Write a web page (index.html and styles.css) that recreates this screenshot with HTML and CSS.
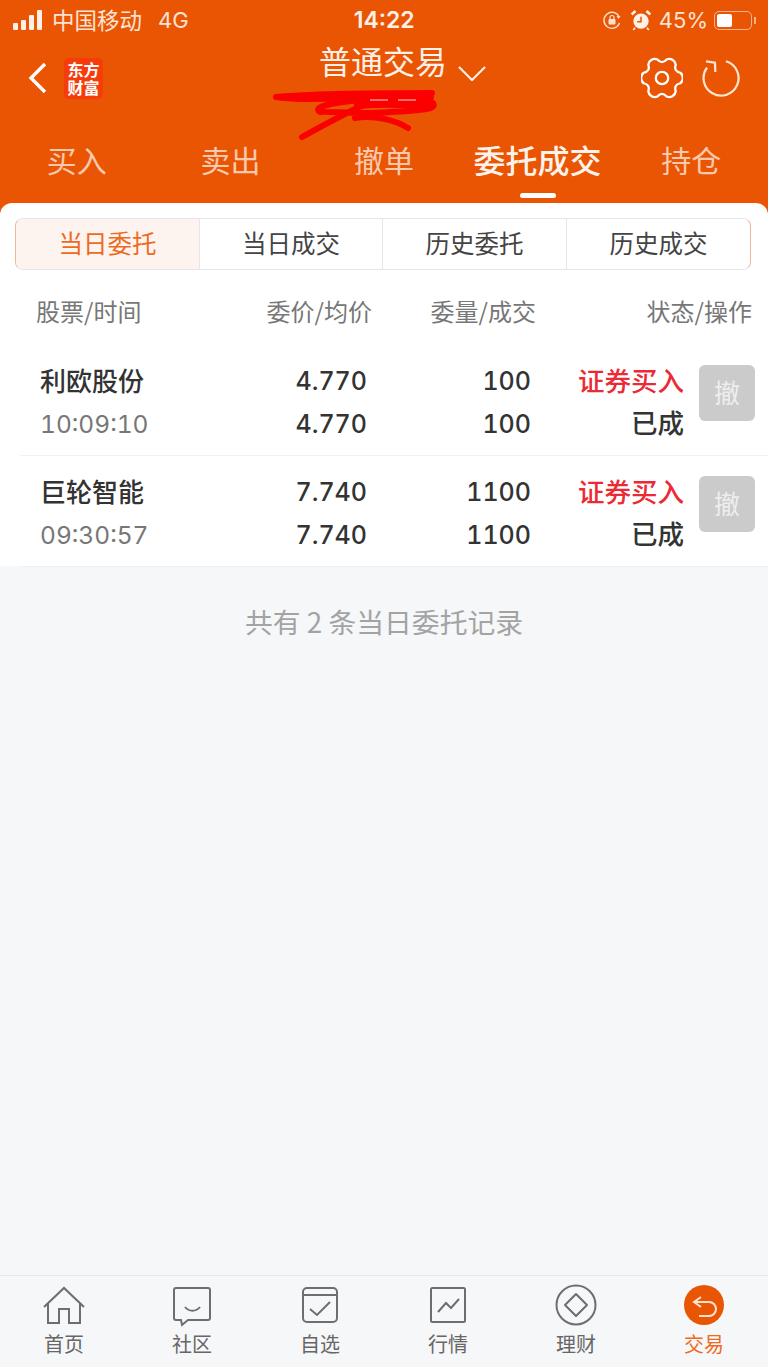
FILE: index.html
```html
<!DOCTYPE html>
<html lang="zh">
<head>
    <meta charset="UTF-8">
    <title>普通交易</title>
    <link rel="stylesheet" href="styles.css">
</head>
<body>
<div class="page">
    <div class="top">
        <div class="status-bar">
            <div class="signal"><i class="b1"></i><i class="b2"></i><i class="b3"></i><i class="b4"></i></div>
            <span class="carrier">中国移动</span>
            <span class="net">4G</span>
            <span class="clock">14:22</span>
            <svg class="lock-icon" width="20" height="20" viewBox="0 0 20 20"><path d="M17 6.500A8 8 0 1 0 17.500 13" fill="none" stroke="#fbe3d3" stroke-width="1.400"/><path d="M14.500 6h4l-2 3z" fill="#fbe3d3"/><rect x="6.500" y="9" width="7" height="5.500" rx="1" fill="#fbe3d3"/><path d="M8 9V7.500a2 2 0 0 1 4 0V9" fill="none" stroke="#fbe3d3" stroke-width="1.200"/></svg>
            <svg class="alarm-icon" width="22" height="22" viewBox="0 0 20 20"><circle cx="10" cy="11" r="7" fill="#fdf0e6"/><path d="M10 7v4.500H6.500" fill="none" stroke="#ea5504" stroke-width="1.400"/><path d="M1.500 5L5 1.800M18.500 5L15 1.800" stroke="#fdf0e6" stroke-width="2.400"/><path d="M4.500 17l-1.500 2M15.500 17l1.500 2" stroke="#fdf0e6" stroke-width="1.500"/></svg>
            <span class="percent">45%</span>
            <div class="battery"><div class="battery-level"></div></div>
            <div class="battery-tip"></div>
        </div>

        <div class="nav">
            <svg class="back-icon" width="22" height="34" viewBox="0 0 22 34"><path d="M19 3L5 17l14 14" fill="none" stroke="#fff" stroke-width="3.400"/></svg>
            <div class="logo"><span>东方</span><span>财富</span></div>
            <div class="title-wrap">
                <span class="title">普通交易</span>
                <svg class="caret" width="30" height="18" viewBox="0 0 30 18"><path d="M2 2l13 13L28 2" fill="none" stroke="#fdf0e6" stroke-width="2.200"/></svg>
            </div>
            <svg class="gear-icon" width="42" height="42" viewBox="0 0 44 44"><path d="M26.800 2.600A7 7 0 0 1 36.400 8.100Q34.100 15 41.200 16.500A7 7 0 0 1 41.200 27.500Q34.100 29 36.400 35.900A7 7 0 0 1 26.800 41.400Q22 36 17.200 41.400A7 7 0 0 1 7.600 35.900Q9.900 29 2.800 27.500A7 7 0 0 1 2.800 16.500Q9.900 15 7.600 8.100A7 7 0 0 1 17.200 2.600Q22 8 26.800 2.600Z" fill="none" stroke="#fff" stroke-width="2.400" stroke-linejoin="round"/><circle cx="22" cy="22" r="6.500" fill="none" stroke="#fff" stroke-width="2.400"/></svg>
            <svg class="refresh-icon" width="40" height="40" viewBox="0 0 40 40"><path d="M25 3.300A17.500 17.500 0 1 1 6 9.700" fill="none" stroke="#fde6d6" stroke-width="2.200"/><path d="M5 3.300l9 1.400.300 9.300" fill="none" stroke="#fde6d6" stroke-width="2.200"/></svg>
            <!-- hidden account name, scribbled over -->
            <svg class="scribble" width="175" height="60" viewBox="0 0 175 60"><path d="M6 12C50 8 120 8 162 8M6 12C40 17 70 12 90 12C120 10 150 12 163 18C168 24 150 26 120 27C90 30 60 26 50 27C42 22 60 18 90 15M32 52C50 42 75 28 110 12M85 33C105 30 125 35 138 43" fill="none" stroke="#fb0000" stroke-width="6" stroke-linecap="round" stroke-linejoin="round"/><path d="M40 12H160M88 20C120 17 140 20 160 20" fill="none" stroke="#fb0000" stroke-width="8" stroke-linecap="round"/><path d="M100 15H118M128 15H146" fill="none" stroke="#ffd6c8" stroke-width="1.200"/></svg>
        </div>

        <div class="main-tabs">
            <div class="main-tab">买入</div>
            <div class="main-tab">卖出</div>
            <div class="main-tab">撤单</div>
            <div class="main-tab active">委托成交</div>
            <div class="main-tab">持仓</div>
        </div>
    </div>

    <div class="card">
        <div class="sub-tabs">
            <div class="sub-tab active">当日委托</div>
            <div class="sub-tab">当日成交</div>
            <div class="sub-tab">历史委托</div>
            <div class="sub-tab">历史成交</div>
        </div>

        <div class="list-head">
            <span>股票/时间</span>
            <span class="right">委价/均价</span>
            <span class="right">委量/成交</span>
            <span class="right">状态/操作</span>
        </div>

        <div class="order">
            <div class="order-name">利欧股份</div>
            <div class="num">4.770</div>
            <div class="num">100</div>
            <div class="state buy">证券买入</div>
            <div class="cancel">撤</div>
            <div class="order-time">10:09:10</div>
            <div class="num">4.770</div>
            <div class="num">100</div>
            <div class="state">已成</div>
        </div>
        <div class="order">
            <div class="order-name">巨轮智能</div>
            <div class="num">7.740</div>
            <div class="num">1100</div>
            <div class="state buy">证券买入</div>
            <div class="cancel">撤</div>
            <div class="order-time">09:30:57</div>
            <div class="num">7.740</div>
            <div class="num">1100</div>
            <div class="state">已成</div>
        </div>
    </div>

    <div class="records">共有 2 条当日委托记录</div>

    <div class="tabbar">
        <div class="tab-item">
            <svg width="44" height="44" viewBox="0 0 44 44"><path d="M2 23L22 4l20 19M6 19v20h11V25h10v14h11V19" fill="none" stroke="#6e6e6e" stroke-width="2"/></svg>
            <span>首页</span>
        </div>
        <div class="tab-item">
            <svg width="44" height="44" viewBox="0 0 44 44"><path d="M6 4h32a2 2 0 0 1 2 2v28a2 2 0 0 1-2 2H18l-6 5-1-5H6a2 2 0 0 1-2-2V6a2 2 0 0 1 2-2z" fill="none" stroke="#6e6e6e" stroke-width="2"/><path d="M15 23c4 5 11 5 15 0" fill="none" stroke="#6e6e6e" stroke-width="2"/></svg>
            <span>社区</span>
        </div>
        <div class="tab-item">
            <svg width="44" height="44" viewBox="0 0 44 44"><rect x="5" y="4" width="34" height="34" rx="4" fill="none" stroke="#6e6e6e" stroke-width="2"/><path d="M5 11h34" fill="none" stroke="#6e6e6e" stroke-width="2"/><path d="M12 25l7 6 13-13" fill="none" stroke="#6e6e6e" stroke-width="2"/></svg>
            <span>自选</span>
        </div>
        <div class="tab-item">
            <svg width="44" height="44" viewBox="0 0 44 44"><rect x="5" y="4" width="34" height="34" rx="1.500" fill="none" stroke="#6e6e6e" stroke-width="2"/><path d="M12 28l8-9 5 5 8-9" fill="none" stroke="#6e6e6e" stroke-width="2"/></svg>
            <span>行情</span>
        </div>
        <div class="tab-item">
            <svg width="44" height="44" viewBox="0 0 44 44"><circle cx="22" cy="21" r="19.500" fill="none" stroke="#6e6e6e" stroke-width="2"/><path d="M22 10l11 11-11 11-11-11z" fill="none" stroke="#6e6e6e" stroke-width="2" stroke-linejoin="round"/></svg>
            <span>理财</span>
        </div>
        <div class="tab-item current">
            <svg width="44" height="44" viewBox="0 0 44 44"><circle cx="22" cy="21" r="20" fill="#ea5504"/><path d="M19 13l-7 5 7 5M12 18h15a7 7 0 0 1 0 14H17" fill="none" stroke="#fbe3d3" stroke-width="2"/></svg>
            <span>交易</span>
        </div>
    </div>
</div>
</body>
</html>
```

FILE: styles.css
```css
body {
    margin: 0;
    font-family: "Noto Sans CJK SC", "Noto Sans", sans-serif;
    color: #333;
}
.page {
    display: flex;
    flex-direction: column;
    height: 1367px;
    overflow: hidden;
    background-color: #f6f7f9;
}
.top {
    background-color: #ea5504;
    height: 213px;
    flex-shrink: 0;
}
.status-bar {
    display: flex;
    align-items: center;
    height: 40px;
    padding: 0 12px 0 13px;
    color: #fbe3d3;
    font-size: 22.500px;
}
.signal {
    display: flex;
    align-items: flex-end;
    gap: 3px;
    height: 20px;
    width: 31px;
}
.signal i {
    display: block;
    width: 5px;
    background-color: #fdf0e6;
    border-radius: 1px;
}
.signal .b1 { height: 7px; }
.signal .b2 { height: 10px; }
.signal .b3 { height: 15px; }
.signal .b4 { height: 20px; }
.carrier {
    margin-left: 8px;
    margin-top: -2px;
}
.net {
    margin-left: 16px;
    font-family: "Inter", sans-serif;
    font-size: 22px;
}
.clock {
    margin-left: 165px;
    font-family: "Inter", sans-serif;
    font-size: 23px;
    font-weight: 600;
    color: #fdf0e6;
}
.lock-icon {
    margin-left: auto;
}
.alarm-icon {
    margin-left: 8px;
}
.percent {
    margin-left: 7px;
    font-family: "Inter", sans-serif;
    font-size: 22px;
}
.battery {
    width: 38px;
    height: 19px;
    margin-left: 6px;
    padding: 2px;
    box-sizing: border-box;
    border: 1px solid #f5b48f;
    border-radius: 5px;
}
.battery-level {
    width: 15px;
    height: 13px;
    background-color: #fff;
    border-radius: 2px;
}
.battery-tip {
    width: 2px;
    height: 7px;
    margin-left: 2px;
    background-color: #f5b48f;
}
.nav {
    position: relative;
    display: flex;
    align-items: center;
    height: 76px;
    padding-left: 26px;
}
.logo {
    display: flex;
    flex-direction: column;
    align-items: center;
    justify-content: center;
    width: 39px;
    height: 41px;
    margin-left: 16px;
    background-color: #f63c0a;
    border-radius: 5px;
    color: #fff;
    font-size: 16px;
    font-weight: 700;
    line-height: 18px;
}
.title-wrap {
    display: flex;
    height: 40px;
    margin: -36px 0 0 216px;
    color: #fdf0e6;
}
.title {
    font-size: 32px;
    line-height: 40px;
}
.caret {
    margin: 25px 0 0 10px;
}
.gear-icon {
    margin-left: 154px;
}
.refresh-icon {
    margin-left: 18px;
}
.scribble {
    position: absolute;
    left: 270px;
    top: 45px;
}
.main-tabs {
    display: grid;
    grid-template-columns: repeat(5, 1fr);
    margin-top: 20px;
}
.main-tab {
    position: relative;
    text-align: center;
    font-size: 30px;
    line-height: 46px;
    color: #f9c9ae;
}
.main-tab.active {
    color: #fdf3ea;
    font-size: 32px;
    font-weight: 500;
}
.main-tab.active::after {
    content: "";
    position: absolute;
    left: 59px;
    bottom: -16px;
    width: 36px;
    height: 5px;
    border-radius: 3px;
    background-color: #fff;
}
.card {
    margin-top: -10px;
    height: 363px;
    flex-shrink: 0;
    box-sizing: border-box;
    padding-top: 15px;
    background-color: #fff;
    border-radius: 12px 12px 0 0;
}
.sub-tabs {
    display: grid;
    grid-template-columns: 183px 183px 184px 184px;
    width: 736px;
    height: 52px;
    margin-left: 15px;
    box-sizing: border-box;
    border: 1px solid #e6e6ea;
    border-left-color: #f0b697;
    border-right-color: #f0b697;
    border-radius: 8px;
}
.sub-tab {
    display: flex;
    align-items: center;
    justify-content: center;
    padding-bottom: 4px;
    box-sizing: border-box;
    border-left: 1px solid #e6e6ea;
    font-size: 24.500px;
    color: #444;
}
.sub-tab:first-child {
    border-left: none;
    border-radius: 7px 0 0 7px;
}
.sub-tab.active {
    background-color: #fdf4f0;
    color: #ee6a1f;
}
.list-head {
    display: grid;
    grid-template-columns: 191px 145px 164px 216px;
    padding-left: 36px;
    margin: 24px 0 17px;
    font-size: 24px;
    line-height: 34px;
    color: #777;
}
.right {
    text-align: right;
}
.order {
    display: grid;
    grid-template-columns: 187px 140px 164px 153px 15px 56px;
    grid-template-rows: 42px 43px;
    align-items: center;
    align-content: start;
    height: 111px;
    margin-left: 20px;
    padding: 15px 0 0 20px;
    box-sizing: border-box;
    border-bottom: 1px solid #f1f1f3;
}
.order-name {
    margin-top: -4px;
    font-size: 26px;
    font-weight: 500;
    color: #333;
}
.order-time {
    grid-column: 1;
    font-family: "Inter", sans-serif;
    font-size: 24.500px;
    font-variant-numeric: tabular-nums;
    color: #777;
}
.num {
    text-align: right;
    font-family: "Inter", sans-serif;
    font-size: 25px;
    font-weight: 500;
    font-variant-numeric: tabular-nums;
    color: #333;
}
.state {
    margin-top: -4px;
    text-align: right;
    font-size: 26.500px;
    font-weight: 500;
    color: #333;
}
.buy {
    color: #ec2a35;
}
.cancel {
    grid-column: 6;
    grid-row: 1 / 3;
    align-self: start;
    display: flex;
    align-items: center;
    justify-content: center;
    box-sizing: border-box;
    width: 56px;
    height: 56px;
    margin-top: 5px;
    padding-bottom: 4px;
    border-radius: 6px;
    background-color: #cbcbcb;
    color: #eee;
    font-size: 26px;
}
.records {
    margin-top: 35px;
    text-align: center;
    font-size: 27.800px;
    line-height: 40px;
    color: #a3a3a3;
}
.tabbar {
    display: grid;
    grid-template-columns: repeat(6, 1fr);
    height: 91px;
    margin-top: auto;
    border-top: 1px solid #e8e8ee;
}
.tab-item {
    display: flex;
    flex-direction: column;
    align-items: center;
    padding-top: 8px;
    font-size: 20px;
    line-height: 28px;
    color: #666;
}
.tab-item span {
    margin-top: 2px;
}
.tab-item.current {
    color: #ee6a1f;
}
```
